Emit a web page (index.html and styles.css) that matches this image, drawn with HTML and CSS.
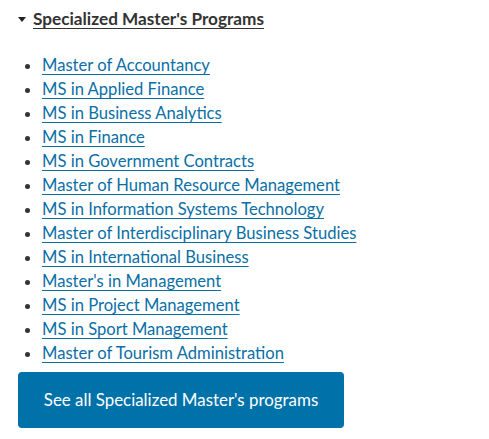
FILE: index.html
```html
<!DOCTYPE html>
<html lang="en">
<head>
  <meta charset="UTF-8">
  <meta name="viewport" content="width=device-width, initial-scale=1.0">
  <title>Specialized Master's Programs</title>
  <link rel="stylesheet" href="styles.css">
</head>
<body>
  <details class="programs" open>
    <summary class="programs-title"><span class="caret"></span><span class="title-text">Specialized Master's Programs</span></summary>
    <ul class="program-list">
      <li><a href="#">Master of Accountancy</a></li>
      <li><a href="#">MS in Applied Finance</a></li>
      <li><a href="#">MS in Business Analytics</a></li>
      <li><a href="#">MS in Finance</a></li>
      <li><a href="#">MS in Government Contracts</a></li>
      <li><a href="#">Master of Human Resource Management</a></li>
      <li><a href="#">MS in Information Systems Technology</a></li>
      <li><a href="#">Master of Interdisciplinary Business Studies</a></li>
      <li><a href="#">MS in International Business</a></li>
      <li><a href="#">Master's in Management</a></li>
      <li><a href="#">MS in Project Management</a></li>
      <li><a href="#">MS in Sport Management</a></li>
      <li><a href="#">Master of Tourism Administration</a></li>
    </ul>
    <a class="see-all" href="#">See all Specialized Master's programs</a>
  </details>
</body>
</html>
```

FILE: styles.css
```css
body {
  margin: 0;
  font-family: Lato, "Open Sans", sans-serif;
  color: #333;
  background: #fff;
}
.programs {
  padding: 8px 0 0 18px;
}
.programs-title {
  list-style: none;
  display: flex;
  align-items: center;
  gap: 7px;
  font-size: 17.2px;
  font-weight: bold;
  line-height: 22px;
  cursor: pointer;
}
.programs-title::-webkit-details-marker {
  display: none;
}
.caret {
  width: 0;
  height: 0;
  border-left: 4px solid transparent;
  border-right: 4px solid transparent;
  border-top: 5px solid #222;
}
.title-text {
  text-decoration: underline;
  text-underline-offset: 3px;
}
.program-list {
  margin: 23px 0 7px;
  padding-left: 24px;
  font-size: 16.6px;
  line-height: 24px;
}
.program-list a {
  color: #0a6fa6;
  text-decoration: underline;
  text-underline-offset: 3px;
}
.see-all {
  display: inline-block;
  width: 326px;
  height: 56px;
  line-height: 56px;
  text-align: center;
  background: #0072aa;
  color: #fff;
  border-radius: 4px;
  font-size: 16.9px;
  text-decoration: none;
}
```
